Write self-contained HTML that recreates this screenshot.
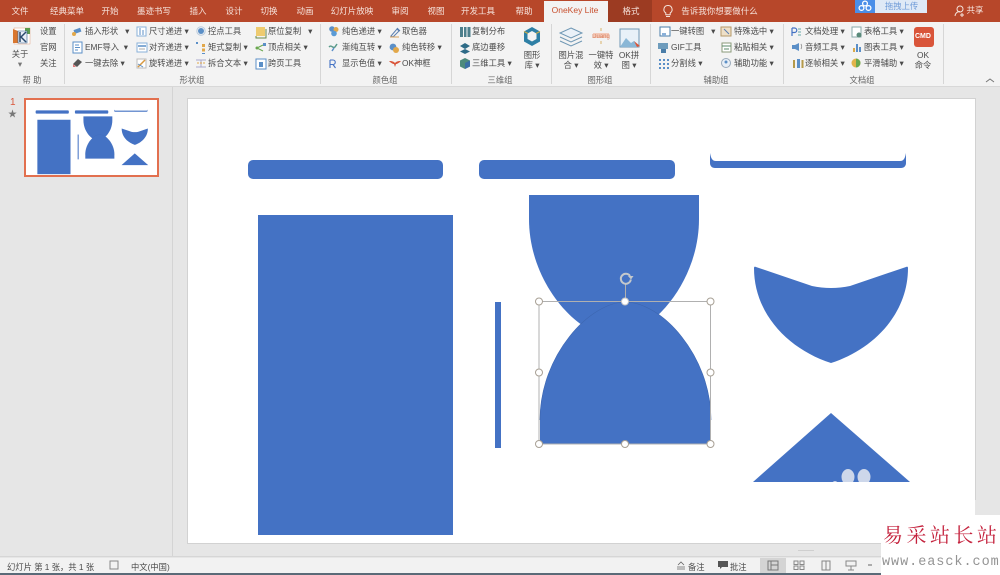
<!DOCTYPE html>
<html lang="zh">
<head>
<meta charset="utf-8">
<style>
html,body{margin:0;padding:0}
body{width:1000px;height:575px;overflow:hidden;position:relative;background:#e6e6e6;font-family:"Liberation Sans","Noto Sans CJK SC",sans-serif;color:#444}
.a{position:absolute;white-space:nowrap}
#top{position:absolute;left:0;top:0;width:1000px;height:22px;background:#b7472a}
#rib{position:absolute;left:0;top:22px;width:1000px;height:64px;background:#f3f3f3;border-bottom:1px solid #d8d8d8}
.t{position:absolute;top:5px;line-height:12px;font-size:8.500px;color:#f6e3dc;transform:translateX(-50%);white-space:nowrap;filter:blur(.3px)}
.r{position:absolute;font-size:8.300px;line-height:12px;color:#4a4a4a;white-space:nowrap;filter:blur(.3px)}
.c{transform:translateX(-50%)}
.g{color:#666}
.d{position:absolute;top:24px;width:1px;height:60px;background:#d6d6d6}
svg{position:absolute;overflow:visible}
.soft{filter:blur(.3px)}
</style>
</head>
<body>
<div id="top"></div>
<div class="a" style="left:544px;top:1px;width:64px;height:21px;background:#f3f3f3"></div>
<div class="a" style="left:608px;top:0;width:44px;height:22px;background:#9c3b22"></div>
<div class="t" style="left:20px">文件</div>
<div class="t" style="left:67px">经典菜单</div>
<div class="t" style="left:110px">开始</div>
<div class="t" style="left:154px">墨迹书写</div>
<div class="t" style="left:198px">插入</div>
<div class="t" style="left:234px">设计</div>
<div class="t" style="left:269px">切换</div>
<div class="t" style="left:305px">动画</div>
<div class="t" style="left:352px">幻灯片放映</div>
<div class="t" style="left:400px">审阅</div>
<div class="t" style="left:436px">视图</div>
<div class="t" style="left:478px">开发工具</div>
<div class="t" style="left:524px">帮助</div>
<div class="t" style="left:575px;color:#c8502f;top:4px">OneKey Lite</div>
<div class="t" style="left:631px">格式</div>
<div class="t" style="left:719.500px;top:5px">告诉我你想要做什么</div>
<div class="t" style="left:975px;top:4px">共享</div>

<svg class="soft" style="left:0;top:0" width="1000" height="22">
<path d="M668 5.500a4 4 0 0 1 2.200 7.400v1.800h-4.400v-1.800A4 4 0 0 1 668 5.500z M666 16.500h4" fill="none" stroke="#f4e4dc" stroke-width="1"/>
<circle cx="960" cy="9" r="3" fill="none" stroke="#f4e4dc" stroke-width="1"/>
<path d="M955 16c.5-3 2.500-4.500 5-4.500M962 13v4M960 15h4" fill="none" stroke="#f4e4dc" stroke-width="1"/>
<rect x="855" y="0" width="20" height="13" fill="#4a8ee8"/>
<rect x="875" y="0" width="52" height="13" fill="#dfe9f6"/>
<circle cx="865" cy="3.500" r="2.400" fill="none" stroke="#fff" stroke-width="1.300"/>
<circle cx="861.500" cy="8" r="2.400" fill="none" stroke="#fff" stroke-width="1.300"/>
<circle cx="868.500" cy="8" r="2.400" fill="none" stroke="#fff" stroke-width="1.300"/>
</svg>
<div class="r" style="left:885px;top:0;color:#6f9bd8">拖拽上传</div>

<div id="rib"></div>
<div class="d" style="left:64px"></div>
<div class="d" style="left:320px"></div>
<div class="d" style="left:451px"></div>
<div class="d" style="left:551px"></div>
<div class="d" style="left:650px"></div>
<div class="d" style="left:783px"></div>
<div class="d" style="left:943px"></div>

<!-- ribbon icons -->
<svg class="soft" style="left:0;top:0" width="1000" height="90">
<g transform="translate(1 -1)">
<rect x="13" y="29" width="16" height="16" fill="#fff" stroke="#e0a080" stroke-width=".5"/>
<path d="M12 30l5 2v12h-5z" fill="#d9772f"/>
<path d="M24 29h5v6h-5z" fill="#5a9b4e"/>
<path d="M17 32h9v12h-9z" fill="#e8eef6" stroke="#2e5e8e" stroke-width=".6"/>
<path d="M19 33v10M25 33l-5 5 5 5" fill="none" stroke="#2a4a6e" stroke-width="1.500"/>
</g>
<!-- col 1 -->
<rect x="74" y="29" width="7" height="4" fill="#5b8fc7" transform="rotate(-20 77 31)"/><circle cx="74" cy="34" r="2" fill="#e2a84b"/>
<rect x="73" y="42" width="9" height="11" fill="#fff" stroke="#5b8fc7"/><path d="M75 45h4M75 47.500h5M75 50h3" stroke="#5b8fc7"/>
<path d="M73 64l5-5 4 3-5 5z" fill="#555"/><path d="M73 64l3 3h-3z" fill="#d77"/>
<!-- col 2 -->
<rect x="137" y="27" width="9" height="9" fill="#fff" stroke="#8ab0d8"/><path d="M140 28v7M143 30v5" stroke="#5b8fc7"/>
<rect x="137" y="43" width="10" height="9" fill="#fff" stroke="#8ab0d8"/><path d="M138 46h8" stroke="#5b8fc7" stroke-width="1.500"/><path d="M139 49h6" stroke="#aaa"/>
<rect x="137" y="59" width="9" height="9" fill="#fff" stroke="#bbb"/><path d="M138 67l7-7" stroke="#d9993f" stroke-width="1.500"/><path d="M138 64l5 3" stroke="#5b8fc7"/>
<!-- col 3 -->
<circle cx="201" cy="31" r="3" fill="#5b8fc7"/><circle cx="201" cy="31" r="4.200" fill="none" stroke="#bcd"/>
<path d="M196 42h2v2h-2z" fill="#5b8fc7"/><path d="M202 44h3v3h-3zM202 48.500h3v3h-3z" fill="#e2a84b"/><path d="M202 53h3v1h-3z" fill="#5b8fc7"/>
<path d="M196 60h10M196 67h10M201 60v7" stroke="#aac" fill="none"/><path d="M197 63h8" stroke="#e2a84b" stroke-dasharray="2 1"/>
<!-- col 4 -->
<rect x="256" y="27" width="9" height="9" fill="#eecb6f"/><path d="M256 36v2h10v-9" fill="none" stroke="#6a8a4a"/>
<path d="M257 48l6-3M257 48l6 3" stroke="#6aa84f" fill="none"/><circle cx="257" cy="48" r="1.500" fill="#6aa84f"/><rect x="263" y="43" width="3" height="3" fill="#5b8fc7"/>
<rect x="256" y="59" width="10" height="10" fill="#fff" stroke="#5b8fc7"/><rect x="259" y="62" width="4" height="5" fill="#5b8fc7"/>
<!-- colour group -->
<circle cx="332" cy="29" r="2.800" fill="#5b8fc7"/><circle cx="336" cy="29.500" r="2.500" fill="#e2a84b"/><circle cx="334" cy="33.500" r="2.800" fill="#5b9bd5"/>
<path d="M329 47c3-3 3 2 6 0l2-3" stroke="#5a9a8a" fill="none" stroke-width="1.500"/><path d="M332 51l2-3" stroke="#5b8fc7" stroke-width="1.500"/>
<path d="M330 60v8M330 60h3a2 2 0 0 1 0 4.500h-3M333 64.500l2.500 3.500" fill="none" stroke="#4472c4" stroke-width="1.100"/>
<path d="M391 36l6-7 2 2-6 6zM397 28l3 3" fill="none" stroke="#5b7fb0"/><path d="M390 37h9" stroke="#d9a05b"/>
<circle cx="393" cy="47" r="3.400" fill="#5b8fc7"/><circle cx="396" cy="50" r="3" fill="#e2a84b"/>
<path d="M389 61c4 0 5 1 6 2 1-1 2-2 6-2-2 2-4 3-5 3l-1 3-1-3c-1 0-3-1-5-3z" fill="#d9553a"/>
<!-- 3d group -->
<path d="M460 27h3v10h-3zM464 27h2.500v10H464zM467.500 27h3v10h-3z" fill="#4d7f8c"/>
<path d="M465 43l5 3-5 3-5-3zM465 49l5 2.500-5 2.500-5-2.500z" fill="#2e6b87"/>
<path d="M465 58l5 2.500v6L465 69l-5-2.500v-6z" fill="#4d8a7c"/><path d="M465 63l5-2.500v6L465 69z" fill="#3a6ea5"/>
<path d="M532 27l8 4.500v10l-8 4.500-8-4.500v-10z" fill="#2e7fa5"/><path d="M532 31l4.500 2.500v5.500l-4.500 2.500-4.500-2.500v-5.500z" fill="#f3f3f3"/><path d="M524 31.500l4 2M540 31.500l-4 2" stroke="#d2b14a"/>
<!-- pic group -->
<path d="M571 28l11 5-11 5-11-5z" fill="#eaf1f8" stroke="#6f97b4"/><path d="M560 37l11 5 11-5M560 41l11 5 11-5" fill="none" stroke="#6f97b4"/>
<path d="M593 33h16v5h-16z" fill="#f3c9b8"/><path d="M601 28v3M601 41v3" stroke="#d9b36b"/>
<rect x="620" y="29" width="19" height="18" fill="#e8f1f8" stroke="#6f97b4"/><path d="M620 47l6-9 5 5 3-2 5 6z" fill="#8ab7d6"/><path d="M634 41l6 5-3 1" fill="#d9553a"/>
<!-- aux group -->
<rect x="660" y="27" width="10" height="9" fill="#fff" stroke="#4a7da8"/><rect x="662" y="33" width="4" height="3" fill="#8ab0d8"/>
<path d="M658 43h10v6h-10z" fill="#6e9cbc"/><rect x="661" y="49" width="5" height="4" fill="#4a7da8"/>
<path d="M659 59h2v2h-2zM663 59h2v2h-2zM667 59h2v2h-2zM659 63h2v2h-2zM663 63h2v2h-2zM667 63h2v2h-2zM659 67h2v2h-2zM663 67h2v2h-2zM667 67h2v2h-2z" fill="#5b8fc7"/>
<rect x="721" y="27" width="10" height="9" fill="#eee0c8" stroke="#b59a6a"/><path d="M724 29l5 5" stroke="#5b7fb0"/>
<rect x="722" y="43" width="9" height="9" fill="#fff" stroke="#8a9a7a"/><path d="M722 46h9M724 49h5" stroke="#5a8a6a"/>
<circle cx="726" cy="63" r="4.500" fill="#e8eef6" stroke="#9ab"/><circle cx="726" cy="62" r="1.500" fill="#5b8fc7"/>
<!-- doc group -->
<path d="M792 28h2.500a2.200 2.200 0 0 1 0 4.500H792M792 28v8" fill="none" stroke="#4472c4" stroke-width="1.200"/><path d="M798 29h3M798 32h3M798 35h3" stroke="#6aa"/>
<path d="M792 45h3l4-2v8l-4-2h-3z" fill="#5b8fc7"/><path d="M801 44c1 2 1 3 0 5" stroke="#999" fill="none"/>
<path d="M793 60h2v8h-2zM801.500 60h2v8h-2z" fill="#b59a4a"/><path d="M797 59h3v9h-3z" fill="#5b8fc7"/>
<rect x="852" y="27" width="9" height="10" fill="#fff" stroke="#8aa"/><circle cx="859" cy="35" r="2.500" fill="#5a8a7a"/>
<path d="M856 52v-8h2v8zM859 52v-5h2v5z" fill="#5b8fc7"/><path d="M853 52v-4h2v4z" fill="#d9a94a"/>
<circle cx="856" cy="63" r="4.500" fill="#e2b44b"/><path d="M856 58.500a4.500 4.500 0 0 1 0 9z" fill="#6aa84f"/>
<rect x="914" y="27" width="20" height="20" rx="3" fill="#d9553a"/>
<path d="M986 82l4-3 4 3" fill="none" stroke="#777"/>
</svg>
<div class="r" style="left:915px;top:31px;font-size:7px;font-weight:bold;color:#fff">CMD</div>

<!-- ribbon text -->
<div class="r" style="left:40px;top:25px">设置</div>
<div class="r" style="left:40px;top:41px">官网</div>
<div class="r" style="left:40px;top:57px">关注</div>
<div class="r c" style="left:20px;top:48px">关于</div>
<div class="r c" style="left:20px;top:58px;color:#777">▾</div>
<div class="r c g" style="left:32px;top:74px">帮 助</div>

<div class="r" style="left:85px;top:25px">插入形状 &nbsp;&nbsp;▾</div>
<div class="r" style="left:85px;top:41px">EMF导入 &nbsp;▾</div>
<div class="r" style="left:85px;top:57px">一键去除 ▾</div>
<div class="r" style="left:149px;top:25px">尺寸递进 ▾</div>
<div class="r" style="left:149px;top:41px">对齐递进 ▾</div>
<div class="r" style="left:149px;top:57px">旋转递进 ▾</div>
<div class="r" style="left:208px;top:25px">控点工具</div>
<div class="r" style="left:208px;top:41px">矩式复制 ▾</div>
<div class="r" style="left:208px;top:57px">拆合文本 ▾</div>
<div class="r" style="left:268px;top:25px">原位复制 &nbsp;&nbsp;▾</div>
<div class="r" style="left:268px;top:41px">顶点相关 ▾</div>
<div class="r" style="left:268px;top:57px">跨页工具</div>
<div class="r c g" style="left:192px;top:74px">形状组</div>

<div class="r" style="left:342px;top:25px">纯色递进 ▾</div>
<div class="r" style="left:342px;top:41px">渐纯互转 ▾</div>
<div class="r" style="left:342px;top:57px">显示色值 ▾</div>
<div class="r" style="left:402px;top:25px">取色器</div>
<div class="r" style="left:402px;top:41px">纯色转移 ▾</div>
<div class="r" style="left:402px;top:57px">OK神框</div>
<div class="r c g" style="left:385px;top:74px">颜色组</div>

<div class="r" style="left:472px;top:25px">复制分布</div>
<div class="r" style="left:472px;top:41px">底边垂移</div>
<div class="r" style="left:472px;top:57px">三维工具 ▾</div>
<div class="r c" style="left:532px;top:49px">图形</div>
<div class="r c" style="left:532px;top:59px">库 ▾</div>
<div class="r c g" style="left:500px;top:74px">三维组</div>

<div class="r c" style="left:571px;top:49px">图片混</div>
<div class="r c" style="left:571px;top:59px">合 ▾</div>
<div class="r c" style="left:601px;top:49px">一键特</div>
<div class="r c" style="left:601px;top:59px">效 ▾</div>
<div class="r c" style="left:629px;top:49px">OK拼</div>
<div class="r c" style="left:629px;top:59px">图 ▾</div>
<div class="r c" style="left:601px;top:31px;font-size:6px;color:#d9805f">Duang</div>
<div class="r c g" style="left:600px;top:74px">图形组</div>

<div class="r" style="left:671px;top:25px">一键转图 &nbsp;&nbsp;▾</div>
<div class="r" style="left:671px;top:41px">GIF工具</div>
<div class="r" style="left:671px;top:57px">分割线 ▾</div>
<div class="r" style="left:734px;top:25px">特殊选中 ▾</div>
<div class="r" style="left:734px;top:41px">粘贴相关 ▾</div>
<div class="r" style="left:734px;top:57px">辅助功能 ▾</div>
<div class="r c g" style="left:716px;top:74px">辅助组</div>

<div class="r" style="left:805px;top:25px">文档处理 ▾</div>
<div class="r" style="left:805px;top:41px">音频工具 ▾</div>
<div class="r" style="left:805px;top:57px">逐帧相关 ▾</div>
<div class="r" style="left:864px;top:25px">表格工具 ▾</div>
<div class="r" style="left:864px;top:41px">图表工具 ▾</div>
<div class="r" style="left:864px;top:57px">平滑辅助 ▾</div>
<div class="r c" style="left:923px;top:49px">OK</div>
<div class="r c" style="left:923px;top:59px">命令</div>
<div class="r c g" style="left:862px;top:74px">文档组</div>

<!-- panes -->
<div class="a" style="left:172px;top:87px;width:1px;height:470px;background:#d4d4d4"></div>
<div class="a" style="left:188px;top:99px;width:787px;height:444px;background:#fff;box-shadow:0 0 0 1px #d2d2d2"></div>

<!-- thumbnail -->
<div class="r" style="left:10px;top:97px;color:#d9553a;font-size:10px">1</div>
<div class="r" style="left:8px;top:108px;color:#777;font-size:9px">★</div>
<div class="a" style="left:24px;top:98px;width:131px;height:75px;border:2px solid #e2704f;background:#fff"></div>

<svg style="left:0;top:0" width="1000" height="575">
<defs>
<g id="s">
<rect x="248" y="160" width="195" height="19" rx="5" fill="#4472c4"/>
<rect x="479" y="160" width="196" height="19" rx="5" fill="#4472c4"/>
<path d="M710 153C711 158 712 161 716 161H900C904 161 905 158 906 153V163c0 3-2 5-5 5H715c-3 0-5-2-5-5z" fill="#4472c4"/>
<rect x="258" y="215" width="195" height="320" fill="#4472c4"/>
<rect x="495" y="302" width="6" height="146" fill="#4472c4"/>
<path d="M529 195H699V219C699 284 649 337 614 337S529 284 529 219Z" fill="#4472c4"/>
<path d="M540 444V420C540 355 590 302 625.500 302S711 355 711 420V444Z" fill="#4472c4"/>
<path d="M540 420C540 355 590 302 625.500 302S711 355 711 420" fill="none" stroke="#3d66b0" stroke-width=".6"/>
<path d="M754 268Q754 266 756 267L812 286Q831 290 850 286L906 267Q908 266 908 268C908 315 872 350 831 363C790 350 754 315 754 268Z" fill="#4472c4"/>
<path d="M831 413L910 482H753Z" fill="#4472c4"/>
</g>
<clipPath id="tri"><rect x="740" y="400" width="180" height="82"/></clipPath>
</defs>
<use href="#s"/>
<g transform="translate(-6.500 83.200) scale(.17)"><use href="#s"/></g>
<g clip-path="url(#tri)" fill="#cdd7ea">
<ellipse cx="848" cy="477" rx="6.500" ry="8"/>
<ellipse cx="864" cy="477" rx="6.500" ry="8"/>
<ellipse cx="835" cy="484" rx="3" ry="3"/>
</g>
<rect x="539" y="301.500" width="171.500" height="142.500" fill="none" stroke="#b0b0b0" stroke-width="1"/>
<path d="M625.500 284V301" stroke="#b0b0b0"/>
<path d="M630 276a5 5 0 1 0 .8 3.500" fill="none" stroke="#c4c8cc" stroke-width="2"/>
<path d="M628 276h5.500l-2.500 3.500z" fill="#c4c8cc"/>
<g fill="#fff" stroke="#a8a095" stroke-width="1">
<circle cx="539" cy="301.500" r="3.500"/><circle cx="710.500" cy="301.500" r="3.500"/>
<circle cx="539" cy="372.500" r="3.500"/><circle cx="710.500" cy="372.500" r="3.500"/>
<circle cx="539" cy="444" r="3.500"/><circle cx="625" cy="444" r="3.500"/><circle cx="710.500" cy="444" r="3.500"/>
<circle cx="625" cy="301.500" r="3.500" stroke="#c8c8c8"/>
</g>
</svg>

<!-- status bar -->
<div class="a" style="left:0;top:556px;width:1000px;height:1px;background:#d6d6d6"></div>
<div class="a" style="left:0;top:558px;width:1000px;height:15px;background:#f2f2f2"></div>
<div class="a" style="left:0;top:573px;width:1000px;height:2px;background:#5a6a78"></div>
<div class="a" style="left:760px;top:558px;width:26px;height:15px;background:#d4d4d4"></div>
<div class="r" style="left:7px;top:561px">幻灯片 第 1 张，共 1 张</div>
<div class="r" style="left:131px;top:561px">中文(中国)</div>
<div class="r" style="left:688px;top:561px">备注</div>
<div class="r" style="left:730px;top:561px">批注</div>
<svg class="soft" style="left:0;top:555px" width="1000" height="20">
<path d="M110 6h8v8l-2 0h-6z" fill="none" stroke="#888"/>
<path d="M678 10l3-3 3 3M677 12h8M677 14h8" fill="none" stroke="#666" stroke-width=".8"/>
<path d="M718 6h10v6h-6l-2 2v-2h-2z" fill="#555"/>
<rect x="768" y="6" width="10" height="9" fill="none" stroke="#777"/><path d="M771 6v9M771 10h7" stroke="#777"/>
<path d="M794 6h4v3.500h-4zM800 6h4v3.500h-4zM794 11h4v3.500h-4zM800 11h4v3.500h-4z" fill="none" stroke="#888"/>
<path d="M822 6h8v9h-8zM826 6v9" fill="none" stroke="#888"/>
<path d="M846 6h10v5h-10zM851 11v4M848 15h6" fill="none" stroke="#888"/>
<path d="M868 10h4" stroke="#666"/>
</svg>
<div class="a" style="left:798px;top:550px;width:16px;height:1px;background:#cfcfcf"></div>

<!-- watermark -->
<div class="a" style="left:881px;top:515px;width:119px;height:60px;background:#fff"></div>
<div class="a" style="left:975px;top:500px;width:25px;height:15px;background:#e6e6e6"></div>
<div class="a" style="left:883px;top:521px;font-family:'Noto Serif CJK SC','Liberation Serif',serif;font-size:20px;line-height:26px;letter-spacing:3.500px;color:#c4213c">易采站长站</div>
<div class="a" style="left:882px;top:555px;font-family:'Liberation Mono',monospace;font-size:13.500px;line-height:16px;color:#949494;letter-spacing:.95px">www.easck.com</div>
</body>
</html>
